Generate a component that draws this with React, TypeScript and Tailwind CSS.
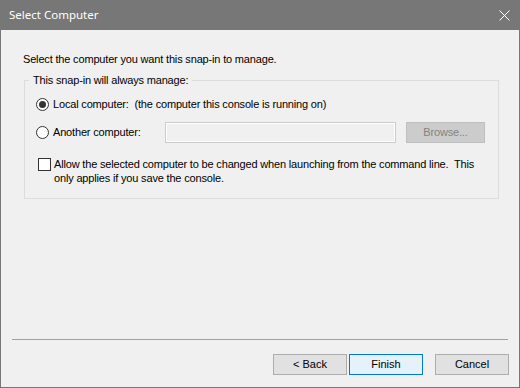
import React from "react";

const ui = { fontFamily: '"Liberation Sans", Arial, sans-serif' };

function Radio({ checked }: { checked?: boolean }) {
  return (
    <span className="w-[13px] h-[13px] rounded-full border border-[#333] bg-white flex items-center justify-center shrink-0">
      {checked && <span className="w-[7px] h-[7px] rounded-full bg-[#333]" />}
    </span>
  );
}

function DlgButton({ label, primary }: { label: string; primary?: boolean }) {
  return (
    <button
      className={
        "w-[74px] h-[21px] border text-[11px] text-black flex items-center justify-center " +
        (primary ? "bg-[#e5f1fb] border-[#0078d7]" : "bg-[#e1e1e1] border-[#adadad]")
      }
    >
      {label}
    </button>
  );
}

export default function App() {
  return (
    <div className="w-[520px] h-[388px] bg-[#f0f0f0] flex flex-col border-x border-b border-[#777777]" style={ui}>
      {/* title bar */}
      <div className="h-[30px] bg-[#777777] -mx-px flex items-center justify-between pl-[9px] pr-[10px] shrink-0">
        <span className="text-white text-[11.5px]" style={{ fontFamily: '"Noto Sans", "Open Sans", sans-serif' }}>
          Select Computer
        </span>
        <svg width="11" height="11" viewBox="0 0 11 11">
          <path d="M0.5 0.5 L10.5 10.5 M10.5 0.5 L0.5 10.5" stroke="#fff" strokeWidth="1" fill="none" />
        </svg>
      </div>

      <div className="flex-1 pl-[22px] pr-[20px] text-[11px] tracking-[-0.17px] text-black">
        <p className="mt-[23px] leading-[13px]">Select the computer you want this snap-in to manage.</p>

        <fieldset className="mt-[8px] ml-px w-[475px] border border-[#dcdcdc] pl-[11px] pr-[13px] pb-[13px]">
          <legend className="-ml-[7px] px-[4px] leading-[13px]">This snap-in will always manage:</legend>

          <div className="mt-[7px] h-[21px] flex items-center gap-[4px]">
            <Radio checked />
            <span className="whitespace-pre">Local computer:  (the computer this console is running on)</span>
          </div>

          <div className="mt-[7px] h-[21px] flex items-center">
            <Radio />
            <span className="ml-[4px] w-[112px]">Another computer:</span>
            <div className="w-[231px] h-[21px] border border-[#cccccc] bg-[#f0f0f0] shadow-[inset_0_0_0_1px_#ffffff]" />
            <div className="ml-[10px] w-[79px] h-[21px] bg-[#cccccc] border border-[#bfbfbf] text-[#838383] flex items-center justify-center">
              Browse...
            </div>
          </div>

          <div className="mt-[14px] flex items-start gap-[3px] ml-[2px]">
            <span className="mt-px w-[13px] h-[13px] border border-[#333] bg-white shrink-0" />
            <span className="leading-[14px] whitespace-pre">
              Allow the selected computer to be changed when launching from the command line.  This
              <br />
              only applies if you save the console.
            </span>
          </div>
        </fieldset>
      </div>

      <div className="mx-[11px] h-px bg-[#a0a0a0]" />

      <div className="flex justify-end pr-[10px] pt-[14px] pb-[12px]">
        <DlgButton label="< Back" />
        <div className="ml-[2px]">
          <DlgButton label="Finish" primary />
        </div>
        <div className="ml-[12px]">
          <DlgButton label="Cancel" />
        </div>
      </div>
    </div>
  );
}
